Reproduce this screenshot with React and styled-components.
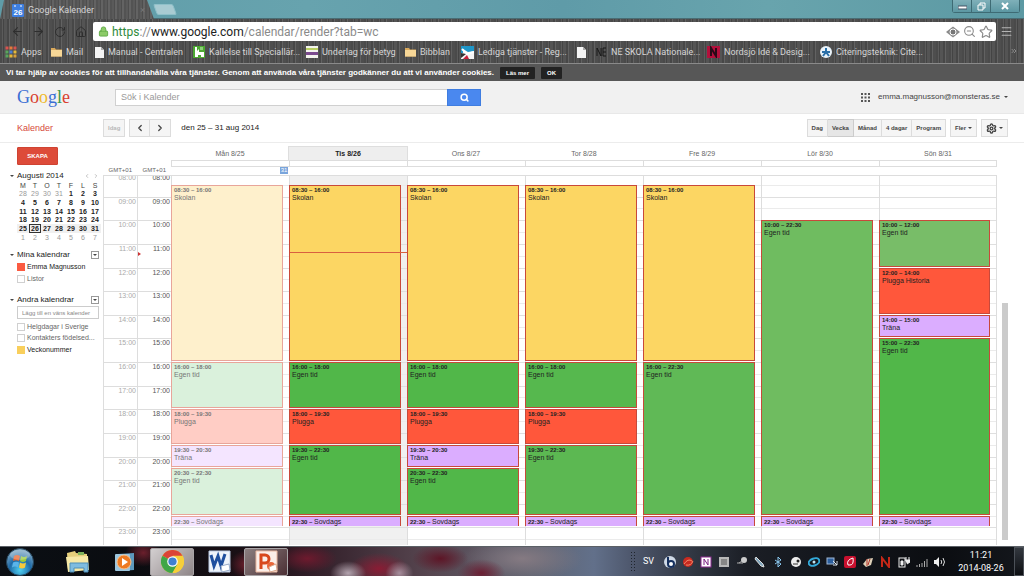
import styled, { createGlobalStyle, css } from 'styled-components';
import { ArrowLeft, ArrowRight, RotateCw, House, ZoomOut, Star, Menu, Search, ChevronLeft, ChevronRight, ChevronsRight, Settings, Lock } from 'lucide-react';

const FIRST_HOUR = 8;
const HOURS = [8, 9, 10, 11, 12, 13, 14, 15, 16, 17, 18, 19, 20, 21, 22, 23];
const HALF_HOURS = Array.from({ length: 32 }, (_, i) => i);

const GlobalStyle = createGlobalStyle`
  * {
    box-sizing: border-box;
  }

  body {
    margin: 0;
    overflow: hidden;
    background: #fff;
    color: #222;
    font: 7px/8px 'Liberation Sans', Arial, sans-serif;
  }

  button, input {
    margin: 0;
    padding: 0;
    font: inherit;
    color: inherit;
  }
`;

const Page = styled.div`
  display: flex;
  flex-direction: column;
  height: 100vh;
`;

/* Browser window */

const TitleBar = styled.div`
  display: flex;
  height: 19px;
  flex: none;
  background: linear-gradient(90deg, #5f9ca8, #67a3ae 30%, #5f9ba8 55%, #68a4ad 75%, #5c99a3);
  border-bottom: 1px solid #4a6d74;
`;

const Tab = styled.div`
  display: flex;
  align-items: center;
  gap: 4px;
  width: 155px;
  height: 19px;
  padding: 1px 10px 0 12px;
  clip-path: polygon(4px 0, 147px 0, 154px 19px, 0 19px);
  background: repeating-linear-gradient(90deg, #5a5a5a 0 2px, #4e4e4e 2px 3px, #636363 3px 5px, #535353 5px 7px);
  color: #d4d4d4;
  font: 9px/12px Roboto, sans-serif;
`;

const TabTitle = styled.span`
  flex: 1;
`;

const TabClose = styled.button`
  border: 0;
  background: none;
  color: #777;
`;

const NewTab = styled.button`
  width: 20px;
  height: 11px;
  margin-top: 4px;
  border: 1px solid #8fc0c9;
  border-radius: 2px;
  background: #a9cbd2;
  transform: skewX(20deg);
`;

const WindowControls = styled.div`
  display: flex;
  height: 13px;
  margin: 0 4px 0 auto;
  border: 1px solid #3e6b74;
  border-top: 0;
  border-radius: 0 0 3px 3px;
`;

const WindowButton = styled.button`
  display: flex;
  justify-content: center;
  align-items: center;
  width: ${({ $wide }) => ($wide ? '28px' : '19px')};
  border: 0;
  border-right: 1px solid #3e6b74;
  background: linear-gradient(#7fb0b9, #5c97a2);

  &:last-child {
    border-right: 0;
  }
`;

const woven = css`
  background: repeating-linear-gradient(90deg, #4a4a4a 0 2px, #5b5b5b 2px 3px, #444 3px 4px, #545454 4px 7px, #474747 7px 9px, #626262 9px 10px, #4e4e4e 10px 13px);
`;

const AddressRow = styled.div`
  display: flex;
  align-items: center;
  height: 24px;
  flex: none;
  padding: 3px 7px 2px 7px;
  ${woven}
`;

const NavButton = styled.button`
  display: flex;
  justify-content: center;
  width: 21px;
  border: 0;
  background: none;
  color: ${({ $light }) => ($light ? '#b5b5b5' : '#2e2e2e')};
`;

const Address = styled.div`
  display: flex;
  flex: 1;
  align-items: center;
  gap: 3px;
  height: 19px;
  margin-left: 2px;
  padding: 0 3px 0 5px;
  border-radius: 2px;
  background: #fff;
  color: #8a8a8a;
  font: 12px/18px Roboto, sans-serif;
`;

const Url = styled.span`
  flex: 1;
`;

const Secure = styled.span`
  color: #2f8b3c;
`;

const Host = styled.span`
  color: #222;
`;

const Bookmarks = styled.nav`
  display: flex;
  align-items: center;
  height: 21px;
  flex: none;
  padding: 0 6px 2px 5px;
  border-bottom: 1px solid #8a8a8a;
  ${woven}
`;

const Bookmark = styled.a`
  display: flex;
  align-items: center;
  gap: 4px;
  width: ${({ $width }) => $width}px;
  flex: none;
  color: #d6d6d6;
  font: 9px/12px Roboto, sans-serif;
  text-decoration: none;
  white-space: nowrap;

  svg {
    flex: none;
  }
`;

const MoreBookmarks = styled.button`
  margin-left: auto;
  border: 0;
  background: none;
  color: #aaa;
`;

/* Google header */

const CookieBar = styled.div`
  display: flex;
  align-items: center;
  height: 17px;
  flex: none;
  padding: 0 6px;
  background: #575757;
  color: #fff;
  font-size: 8px;
  font-weight: bold;
`;

const CookieButton = styled.button`
  height: 12px;
  margin-left: 6px;
  padding: 0 6px;
  border: 0;
  border-radius: 1px;
  background: #222;
  font-size: 6px;
`;

const Header = styled.header`
  display: flex;
  align-items: center;
  height: 33px;
  flex: none;
  padding: 0 16px 0 17px;
  border-bottom: 1px solid #e8e8e8;
  background: #f1f1f1;
`;

const Logo = styled.a`
  width: 98px;
  font: 18px/24px 'Liberation Serif', serif;
  text-decoration: none;
`;

const Letter = styled.span`
  color: ${({ $color }) => $color};
`;

const SearchForm = styled.form`
  display: flex;
  width: 366px;
  height: 17px;
`;

const SearchInput = styled.input`
  flex: 1;
  min-width: 0;
  padding: 0 5px;
  border: 1px solid #d0d0d0;
  border-right: 0;
  outline: none;
  background: #fff;
  font-size: 9px;

  &::placeholder {
    color: #999;
  }
`;

const SearchButton = styled.button`
  display: flex;
  justify-content: center;
  align-items: center;
  width: 34px;
  border: 1px solid #3f7de0;
  background: #4a88ef;
  color: #fff;
`;

const Account = styled.button`
  display: flex;
  align-items: center;
  gap: 4px;
  margin-left: 8px;
  border: 0;
  background: none;
  color: #444;
  font-size: 8px;
`;

const AppsButton = styled.button`
  display: flex;
  margin-left: auto;
  border: 0;
  background: none;
`;

const Caret = styled.span`
  border: 2px solid transparent;
  border-top-color: #444;
  border-bottom: 0;
`;

/* Calendar toolbar */

const Toolbar = styled.div`
  display: flex;
  align-items: center;
  height: 29px;
  flex: none;
  padding: 0 16px 0 17px;
  border-bottom: 1px solid #ececec;
`;

const AppName = styled.h1`
  width: 86px;
  margin: 0;
  color: #d64a3a;
  font-size: 9px;
  font-weight: normal;
`;

const ButtonGroup = styled.div`
  display: flex;
  margin-right: 4px;

  &:last-child {
    margin-right: 0;
  }
`;

const ToolButton = styled.button`
  display: flex;
  justify-content: center;
  align-items: center;
  gap: 2px;
  height: 18px;
  padding: 0 4px;
  min-width: 21px;
  border: 1px solid ${({ $active }) => ($active ? '#ccc' : '#dcdcdc')};
  background: ${({ $active }) => ($active ? '#e6e6e6' : '#f5f5f5')};
  color: ${({ disabled }) => (disabled ? '#b8b8b8' : '#444')};
  font-size: 6px;
  font-weight: bold;

  & + & {
    border-left-width: 0;
  }
`;

const Period = styled.span`
  flex: 1;
  margin-left: 6px;
  font-size: 8px;
`;

/* Sidebar */

const Main = styled.main`
  display: flex;
  flex: 1;
  min-height: 0;
  overflow: hidden;
`;

const Sidebar = styled.aside`
  display: flex;
  flex-direction: column;
  width: 103px;
  flex: none;
  padding: 4px 4px 0 8px;
`;

const CreateButton = styled.button`
  width: 41px;
  height: 18px;
  margin-left: 9px;
  border: 1px solid #cf4332;
  border-radius: 1px;
  background: #dd4b39;
  color: #fff;
  font-size: 6px;
  font-weight: bold;
`;

const SectionTitle = styled.h2`
  display: flex;
  align-items: center;
  gap: 3px;
  height: 12px;
  margin: ${({ $space }) => $space}px 0 0;
  padding-left: 2px;
  font-size: 8px;
  font-weight: normal;
`;

const TitleText = styled.span`
  flex: 1;
`;

const MonthButton = styled.button`
  display: flex;
  border: 0;
  background: none;
  color: #888;
`;

const MenuButton = styled.button`
  display: flex;
  justify-content: center;
  align-items: center;
  width: 8px;
  height: 8px;
  border: 1px solid #999;
  background: #fff;
`;

const MiniMonth = styled.table`
  width: 84px;
  height: 60px;
  margin-left: 9px;
  border-collapse: collapse;
  table-layout: fixed;
  text-align: center;
  line-height: 7px;
`;

const WeekdayCell = styled.th`
  padding: 0;
  font-weight: normal;
  color: #444;
`;

const DayCell = styled.td`
  padding: 0;
  background: ${({ $week }) => ($week ? '#f0f0f0' : 'none')};
  color: ${({ $other }) => ($other ? '#999' : '#222')};
  font-weight: ${({ $other }) => ($other ? 'normal' : 'bold')};
  outline: ${({ $today }) => ($today ? '1px solid #333' : 'none')};
  outline-offset: -1px;
`;

const CalendarItem = styled.label`
  display: flex;
  align-items: center;
  gap: 2px;
  height: ${({ $tall }) => ($tall ? '12px' : '11px')};
  margin-left: 9px;
  color: ${({ $on }) => ($on ? '#222' : '#666')};
  white-space: nowrap;
`;

const Swatch = styled.input`
  appearance: none;
  width: 8px;
  height: 8px;
  border: 1px solid ${({ $color }) => $color || '#d0d0d0'};
  background: ${({ $color }) => $color || '#fff'};
`;

const FriendInput = styled.input`
  width: 82px;
  height: 13px;
  margin: 0 0 2px 9px;
  padding: 0 4px;
  border: 1px solid #ccc;
  font-size: 6px;

  &::placeholder {
    color: #888;
  }
`;

/* Week view */

const Week = styled.section`
  display: flex;
  flex: 1;
  flex-direction: column;
  min-width: 0;
  padding: 4px 0 1px;
`;

const WeekGrid = styled.div`
  display: grid;
  grid-template-columns: 34px 34px repeat(7, 1fr);
  flex: none;
`;

const HeadRow = styled(WeekGrid)`
  margin-right: 27px;
  border-bottom: 1px solid #ddd;
`;

const ZoneName = styled.div`
  align-self: end;
  padding: 0 5px 1px 0;
  color: #666;
  font-size: 6px;
  text-align: right;
`;

const DayHead = styled.div`
  display: flex;
  flex-direction: column;
  height: 28px;
  color: ${({ $today }) => ($today ? '#222' : '#666')};
  font-weight: ${({ $today }) => ($today ? 'bold' : 'normal')};
  text-align: center;
`;

const DayName = styled.div`
  height: 13px;
  background: ${({ $today }) => ($today ? '#eeeeee' : 'none')};
  line-height: 13px;
  outline: ${({ $today }) => ($today ? '1px solid #dedede' : 'none')};
`;

const AllDay = styled.div`
  height: 7px;
  border: 1px solid #ddd;
  border-right-width: 0;

  ${DayHead}:last-child & {
    border-right-width: 1px;
  }
`;

const WeekNumber = styled.span`
  align-self: flex-end;
  width: 8px;
  height: 7px;
  margin-right: 1px;
  background: #7aa5dc;
  color: #fff;
  font-size: 6px;
  line-height: 7px;
`;

const Viewport = styled.div`
  display: flex;
  flex: 1;
  min-height: 0;
  overflow: hidden;
`;

const Body = styled(WeekGrid)`
  grid-template-rows: 100%;
  flex: 1;
  height: 378px;
  margin-top: -3px;
`;

const TimeColumn = styled.div`
  display: grid;
  grid-template-rows: repeat(16, minmax(0, 1fr));
  border-left: 1px solid #ddd;
  color: ${({ $faded }) => ($faded ? '#aaa' : '#555')};
`;

const HourLabel = styled.div`
  border-top: 1px solid #ddd;
  padding-right: 1px;
  line-height: 8px;
  text-align: right;
`;

const DayColumn = styled.div`
  position: relative;
  display: grid;
  grid-template-rows: repeat(32, minmax(0, 1fr));
  grid-template-columns: 1fr;
  border-left: 1px solid #ddd;
  background: ${({ $today }) => ($today ? '#f0f0f0' : '#fff')};

  &:last-child {
    border-right: 1px solid #ddd;
  }
`;

const Slot = styled.div`
  grid-column: 1;
  border-top: 1px solid ${({ $half }) => ($half ? '#ebebeb' : '#dfdfdf')};
`;

const EventBox = styled.article`
  z-index: 1;
  grid-column: 1;
  overflow: hidden;
  margin: 0 6px 1px -1px;
  padding: 1px 2px;
  border: 1px solid ${({ $past }) => ($past ? '#e8a59a' : '#c8493a')};
  background: ${({ $color }) => $color};
  color: ${({ $past }) => ($past ? '#777' : '#222')};
  line-height: 7px;

  ${({ $short }) =>
    $short &&
    css`
      border-bottom: 0;
      line-height: 8px;
      white-space: nowrap;
    `}
`;

const EventTime = styled.div`
  display: ${({ $inline }) => ($inline ? 'inline' : 'block')};
  font-size: 6px;
  font-weight: bold;
`;

const NowLine = styled.div`
  position: absolute;
  z-index: 2;
  right: 0;
  left: 0;
  height: 1px;
  background: #d9603f;
`;

const NowMarker = styled.div`
  position: absolute;
  border: 2px solid transparent;
  border-left: 3px solid #c33;
  border-right: 0;
`;

const ZoneColumn = styled(TimeColumn)`
  position: relative;
`;

const ScrollTrack = styled.div`
  display: flex;
  flex-direction: column;
  justify-content: flex-end;
  width: 27px;
  flex: none;
  padding: 0 16px 5px 5px;
`;

const ScrollThumb = styled.div`
  height: 65%;
  background: #cbcbcb;
`;

/* Windows taskbar */

const Taskbar = styled.footer`
  display: flex;
  align-items: center;
  height: 30px;
  flex: none;
  border-top: 1px solid #5b6066;
  background:
    radial-gradient(ellipse 18px 14px at 14% 20%, #6b1f2c, transparent),
    radial-gradient(ellipse 16px 14px at 24% 60%, #6b1f2c, transparent),
    radial-gradient(ellipse 18px 12px at 34% 90%, #b3a3ae, transparent),
    radial-gradient(ellipse 14px 12px at 39% 90%, #a58e9c, transparent),
    radial-gradient(ellipse 30px 14px at 30% 40%, #6e1a2e, transparent),
    radial-gradient(ellipse 30px 16px at 37% 75%, #8a1c34, transparent),
    radial-gradient(ellipse 28px 14px at 43% 40%, #5d1526, transparent),
    radial-gradient(ellipse 24px 14px at 47% 90%, #6b1f33, transparent),
    radial-gradient(ellipse 60px 22px at 51% 40%, #857a82, transparent),
    linear-gradient(90deg, #0b0f14, #0a0c10 13%, #1c1016 25%, #33202a 31%, #574650 42%, #5f6472 52%, #62708a 58%, #4c556a 62%, #2f3540 68%, #1b1e25 73%, #14171d 80%, #0b0d11 92%, #14171c);
  color: #fff;
  font: 9px/13px Roboto, sans-serif;
`;

const StartButton = styled.button`
  display: flex;
  width: 42px;
  padding-left: 6px;
  border: 0;
  background: none;
`;

const AppButton = styled.button`
  display: flex;
  justify-content: center;
  align-items: center;
  width: 44px;
  height: 28px;
  margin-right: 3px;
  border: 1px solid ${({ $open }) => ($open ? '#a8a4a6' : 'transparent')};
  border-radius: 2px;
  background: ${({ $open, $active }) => ($active ? 'linear-gradient(135deg, #d3cfd0, #8f8688)' : $open ? 'linear-gradient(135deg, #8b7f80, #4c3035)' : 'none')};
`;

const AppList = styled.div`
  display: flex;
  flex: 1;
  padding-left: 14px;
`;

const Grip = styled.div`
  width: 6px;
  height: 22px;
  margin-right: 7px;
  background: radial-gradient(circle, #20252e 1px, transparent 1px) 0 0 / 3px 3px;
`;

const Language = styled.span`
  width: 21px;
`;

const Tray = styled.div`
  display: flex;
  gap: 6px;
`;

const TrayButton = styled.button`
  display: flex;
  width: 12px;
  border: 0;
  background: none;
`;

const Clock = styled.time`
  width: 66px;
  margin-left: 2px;
  text-align: center;
`;

const ShowDesktop = styled.button`
  align-self: stretch;
  width: 10px;
  border: 1px solid #4c5158;
  background: linear-gradient(#33383f, #0c0e12);
`;

const YELLOW = '#fcd663';
const RED = '#ff573b';
const PURPLE = '#dbadff';
const GREEN = '#51b749';

const days = [
  {
    name: 'Mån 8/25',
    past: true,
    events: [
      [8.5, 16, 'Skolan', '#fef0cc'],
      [16, 18, 'Egen tid', '#daf1dc'],
      [18, 19.5, 'Plugga', '#ffcdc5'],
      [19.5, 20.5, 'Träna', '#f4e5ff'],
      [20.5, 22.5, 'Egen tid', '#daf1dc'],
      [22.5, 23, 'Sovdags', '#f4e5ff'],
    ],
  },
  {
    name: 'Tis 8/26',
    today: true,
    events: [
      [8.5, 16, 'Skolan', YELLOW],
      [16, 18, 'Egen tid', GREEN],
      [18, 19.5, 'Plugga', RED],
      [19.5, 22.5, 'Egen tid', GREEN],
      [22.5, 23, 'Sovdags', PURPLE],
    ],
  },
  {
    name: 'Ons 8/27',
    events: [
      [8.5, 16, 'Skolan', YELLOW],
      [16, 18, 'Egen tid', GREEN],
      [18, 19.5, 'Plugga', RED],
      [19.5, 20.5, 'Träna', PURPLE],
      [20.5, 22.5, 'Egen tid', GREEN],
      [22.5, 23, 'Sovdags', PURPLE],
    ],
  },
  {
    name: 'Tor 8/28',
    events: [
      [8.5, 16, 'Skolan', YELLOW],
      [16, 18, 'Egen tid', '#56b84e'],
      [18, 19.5, 'Plugga', RED],
      [19.5, 22.5, 'Egen tid', '#5cb852'],
      [22.5, 23, 'Sovdags', PURPLE],
    ],
  },
  {
    name: 'Fre 8/29',
    events: [
      [8.5, 16, 'Skolan', YELLOW],
      [16, 22.5, 'Egen tid', '#60b956'],
      [22.5, 23, 'Sovdags', PURPLE],
    ],
  },
  {
    name: 'Lör 8/30',
    events: [
      [10, 22.5, 'Egen tid', '#6fbc60'],
      [22.5, 23, 'Sovdags', PURPLE],
    ],
  },
  {
    name: 'Sön 8/31',
    events: [
      [10, 12, 'Egen tid', '#78bd68'],
      [12, 14, 'Plugga Historia', RED],
      [14, 15, 'Träna', PURPLE],
      [15, 22.5, 'Egen tid', GREEN],
      [22.5, 23, 'Sovdags', PURPLE],
    ],
  },
];

const monthRows = [
  [28, 29, 30, 31, 1, 2, 3],
  [4, 5, 6, 7, 8, 9, 10],
  [11, 12, 13, 14, 15, 16, 17],
  [18, 19, 20, 21, 22, 23, 24],
  [25, 26, 27, 28, 29, 30, 31],
  [1, 2, 3, 4, 5, 6, 7],
];

const formatTime = (value) => {
  const hour = String(Math.floor(value)).padStart(2, '0');
  return `${hour}:${value % 1 ? '30' : '00'}`;
};

const toRow = (value) => (value - FIRST_HOUR) * 2 + 1;
const nowOffset = `${((11.35 - FIRST_HOUR) / 16) * 100}%`;

/* Icons */

const AppsIcon = () => (
  <svg width="12" height="12" viewBox="0 0 12 12">
    {['#d9534f', '#e57b3a', '#d9534f', '#58a65c', '#4c7fd0', '#e5b93a', '#58a65c', '#e5b93a', '#d9a03a'].map((fill, i) => (
      <rect key={i} x={(i % 3) * 4 + 0.5} y={Math.floor(i / 3) * 4 + 0.5} width="3" height="3" fill={fill} />
    ))}
  </svg>
);

const FolderIcon = () => (
  <svg width="11" height="10" viewBox="0 0 11 10">
    <path d="M0 1h4l1 1.500h6V9.500H0z" fill="#d9a95c" />
    <path d="M0 3h11v6.500H0z" fill="#f7d797" />
  </svg>
);

const FileIcon = () => (
  <svg width="9" height="11" viewBox="0 0 9 11">
    <path d="M0 0h6l3 3v8H0z" fill="#f4f4f4" />
    <path d="M6 0v3h3z" fill="#aaa" />
  </svg>
);

const SchoolIcon = () => (
  <svg width="12" height="12" viewBox="0 0 12 12">
    <rect width="12" height="12" fill="#4ca832" />
    <path d="M2 1h2v4l2-2v3h5v5H8V9H5v2H2z" fill="#fff" />
    <path d="M7 1h3v3H7z" fill="#8ed07a" />
  </svg>
);

const StripesIcon = () => (
  <svg width="12" height="12" viewBox="0 0 12 12">
    <rect width="12" height="12" fill="#f4f4ee" />
    <path d="M0 2h12v2H0z" fill="#b9cf63" />
    <path d="M0 6h12v3H0z" fill="#7b4b8e" />
  </svg>
);

const RegionIcon = () => (
  <svg width="13" height="13" viewBox="0 0 13 13">
    <rect width="13" height="13" fill="#f5f5f5" />
    <path d="M0 0h13v5L7 6 2 3v4H0z" fill="#1f96c8" />
    <path d="M2 13l4-4 2 4z" fill="#c8203c" />
    <path d="M1 3l5 5 7-2" stroke="#fff" strokeWidth="2" fill="none" />
    <path d="M0 7l5 1-5 4z" fill="#333" />
  </svg>
);

const NeIcon = () => (
  <svg width="11" height="10" viewBox="0 0 11 10" fill="none" stroke="#161616">
    <path d="M1 9V1l4 8V1M10 1H7v8h3M7 5h3" />
  </svg>
);

const NordsjoIcon = () => (
  <svg width="13" height="12" viewBox="0 0 13 12">
    <rect width="13" height="12" fill="#b3103c" />
    <path d="M4 10V2l5 8V2" fill="none" stroke="#2a0a18" strokeWidth="2" />
  </svg>
);

const CiteIcon = () => (
  <svg width="12" height="12" viewBox="0 0 12 12">
    <circle cx="6" cy="6" r="6" fill="#eaf3fa" />
    <path d="M6 2v4M6 6l-4 0M6 6h4M6 6l-3 4M6 6l3 4" stroke="#2a6fa8" strokeWidth="2" />
  </svg>
);

const CalendarIcon = () => (
  <svg width="12" height="13" viewBox="0 0 12 13">
    <rect width="12" height="13" rx="1" fill="#3f7fe0" />
    <path d="M3 1v2M9 1v2" stroke="#fff" />
    <text x="6" y="11" textAnchor="middle" fontSize="8" fontWeight="bold" fill="#fff" fontFamily="Liberation Sans">26</text>
  </svg>
);

const EyeIcon = () => (
  <svg width="14" height="12" viewBox="0 0 14 12">
    <path d="M0 6l7-5.500L14 6l-7 5.500z" fill="#8a8a8a" />
    <circle cx="7" cy="6" r="3" fill="#777" stroke="#fff" />
  </svg>
);

const GridIcon = () => (
  <svg width="9" height="9" viewBox="0 0 9 9" fill="#555">
    {[0, 1, 2, 3, 4, 5, 6, 7, 8].map((i) => (
      <rect key={i} x={(i % 3) * 3.5} y={Math.floor(i / 3) * 3.5} width="2" height="2" />
    ))}
  </svg>
);

const StartOrb = () => (
  <svg width="28" height="28" viewBox="0 0 28 28">
    <defs>
      <radialGradient id="orb" cx="50%" cy="80%" r="80%">
        <stop offset="0" stopColor="#4fd0f0" />
        <stop offset="0.5" stopColor="#1f6ba8" />
        <stop offset="1" stopColor="#8fb2c8" />
      </radialGradient>
    </defs>
    <circle cx="14" cy="14" r="13.500" fill="url(#orb)" stroke="#25455c" />
    <path d="M8 8q3-2 6 0l-1 5q-3-1.500-6 0z" fill="#e8642e" />
    <path d="M15 8q3 2 6 0l-1 5q-3 2-6 0z" fill="#9ccb3b" />
    <path d="M7 14.500q3-1.500 6 0l-1 5q-3-2-6 0z" fill="#5ab4ea" />
    <path d="M14 14.500q3 2 6 0l-1 5q-3 2-6 0z" fill="#f8c93c" />
    <ellipse cx="14" cy="7" rx="10" ry="5" fill="#fff" opacity="0.25" />
  </svg>
);

const ExplorerIcon = () => (
  <svg width="26" height="24" viewBox="0 0 26 24">
    <path d="M2 3l8-2 1 2 11 1v16H3z" fill="#e6cf7c" />
    <path d="M1 7l22-1 1 14-21 2z" fill="#f6e8a6" />
    <path d="M5 13h18v9h-4v-4H9v4H5z" fill="#7fbce0" stroke="#4f8fb8" />
    <path d="M13 2h6v3h-6z" fill="#7db25c" />
  </svg>
);

const PlayerIcon = () => (
  <svg width="20" height="20" viewBox="0 0 20 20">
    <path d="M3 2l16-1v17l-14 1z" fill="#5d99bd" />
    <rect x="0" y="2" width="15" height="17" rx="1" fill="#9cc6de" />
    <circle cx="9" cy="10" r="7" fill="#ee7a22" stroke="#f9c08a" />
    <path d="M7 6l6 4-6 4z" fill="#fff" />
  </svg>
);

const ChromeIcon = () => (
  <svg width="23" height="23" viewBox="0 0 24 24">
    <circle cx="12" cy="12" r="12" fill="#f6cf3a" />
    <path d="M12 12L1.600 6A12 12 0 0 1 22.400 6z" fill="#dc4437" />
    <path d="M12 12L1.600 6A12 12 0 0 0 12 24l5-9z" fill="#3fa648" />
    <path d="M12 6h10.400A12 12 0 0 1 12 24l5-9z" fill="#f6cf3a" />
    <circle cx="12" cy="12" r="5.500" fill="#fff" />
    <circle cx="12" cy="12" r="4.300" fill="#3f80d0" />
  </svg>
);

const WordIcon = () => (
  <svg width="23" height="23" viewBox="0 0 23 23">
    <path d="M1 1h21v21H1z" fill="#eef3fa" stroke="#b9c9e2" />
    <path d="M3 5l3 11 4-10 3 10 4-12" fill="none" stroke="#1f4f9e" strokeWidth="3" />
    <path d="M13 16l8-2 1 6-8 2z" fill="#fff" stroke="#98abc9" />
  </svg>
);

const PowerPointIcon = () => (
  <svg width="23" height="23" viewBox="0 0 23 23">
    <path d="M1 1h21v21H1z" fill="#fbeee8" stroke="#e9b79f" />
    <path d="M6 19V5h4a4 4 0 0 1 0 8H6" fill="none" stroke="#d8481c" strokeWidth="3" />
    <circle cx="16" cy="16" r="4" fill="#e8663a" />
    <path d="M14 17l7-3 1 6-7 2z" fill="#fff" stroke="#d9a58a" />
  </svg>
);

const trayIcons = [
  ['Spotlight', <><circle cx="6" cy="6" r="6" fill="#cfd9e6" /><circle cx="7" cy="8" r="3" fill="#fff" stroke="#16305e" strokeWidth="2" /><path d="M4 1v7" stroke="#16305e" strokeWidth="2" /></>],
  ['Antivirus', <><circle cx="6" cy="6" r="5" fill="#c82a20" /><path d="M2 8q4-6 8-3M4 9q5 1 7-4" stroke="#f28a6a" fill="none" /></>],
  ['OneNote', <><rect x="1" y="1" width="10" height="10" fill="#fff" stroke="#8b2b90" /><path d="M4 9V3l4 6V3" fill="none" stroke="#7b1f82" /></>],
  ['Notes', <><rect x="1" y="1" width="10" height="10" fill="#b8b8b8" /><path d="M3 4h6M3 6h6M3 8h6" stroke="#555" /></>],
  ['Device', <><circle cx="8" cy="4" r="3" fill="#ccc" /><path d="M1 7h6M6 5l-3 2" stroke="#aaa" /></>],
  ['Pen', <path d="M2 1l7 7 1 3-3-1L1 3z" fill="#7fa6bd" stroke="#ddd" />],
  ['Bluetooth', <path d="M3 4l6 4-3 3V1l3 3-6 4" fill="none" stroke="#8ccaf2" />],
  ['Disc', <><circle cx="6" cy="6" r="5" fill="#eee" /><circle cx="8" cy="5" r="1.500" fill="#222" /><path d="M3 8h5" stroke="#333" /></>],
  ['Network tool', <><ellipse cx="6" cy="6" rx="5.500" ry="3.500" fill="none" stroke="#33a9d8" strokeWidth="2" transform="rotate(-20 6 6)" /><circle cx="6" cy="6" r="1.500" fill="#bfe8f7" /></>],
  ['Display', <><rect x="1" y="2" width="7" height="6" fill="#2c5f9e" stroke="#9fb8d6" /><path d="M7 5l4 4M11 5v4H7" stroke="#dde6f0" /></>],
  ['Update', <><rect width="12" height="12" rx="2" fill="#c8102e" /><path d="M4 9q-2-5 5-7 1 7-3 7z" fill="none" stroke="#fff" /></>],
  ['Tools', <><path d="M1 8l4-5 6-1-2 7-5 2z" fill="#ddd0b8" /><path d="M5 3v7M8 3l-2 6" stroke="#b2342a" /></>],
  ['Nero', <path d="M2 11V2l7 9V1" fill="none" stroke="#c42818" strokeWidth="2" />],
  ['Battery', <><rect x="1" y="2" width="6" height="9" fill="none" stroke="#eee" /><path d="M3 5h2v4H3zM8 1v3M11 1v3M7 4h5v2l-3 2" fill="#eee" stroke="#eee" /></>],
  ['Signal', <path d="M1 11V9M3.500 11V8M6 11V7M8.500 11V5M11 11V3" stroke="#aaa" />],
  ['Volume', <><path d="M0 4h2l3-3v10L2 8H0z" fill="#eee" /><path d="M7 4q1.500 2 0 4M9 2q3 4 0 8" stroke="#ddd" fill="none" /></>],
];

const bookmarks = [
  ['Apps', AppsIcon, 46],
  ['Mail', FolderIcon, 44],
  ['Manual - Centralen', FileIcon, 98],
  ['Kallelse till Speciallär...', SchoolIcon, 113],
  ['Underlag för betyg', StripesIcon, 99],
  ['Bibblan', FolderIcon, 56],
  ['Lediga tjänster - Reg...', RegionIcon, 116],
  ['', FileIcon, 19],
  ['NE SKOLA Nationale...', NeIcon, 111],
  ['Nordsjö Idé & Desig...', NordsjoIcon, 113],
  ['Citeringsteknik: Cite...', CiteIcon, 110],
];

const Browser = () => (
  <>
    <TitleBar>
      <Tab>
        <CalendarIcon />
        <TabTitle>Google Kalender</TabTitle>
        <TabClose aria-label="Stäng flik">×</TabClose>
      </Tab>
      <NewTab aria-label="Ny flik" />
      <WindowControls>
        <WindowButton aria-label="Minimera">
          <svg width="9" height="8"><rect y="4" width="9" height="3" fill="#fff" stroke="#456" /></svg>
        </WindowButton>
        <WindowButton aria-label="Återställ">
          <svg width="9" height="9" fill="none" stroke="#fff"><path d="M3 3V1h5v5H6M1 3h5v5H1z" /></svg>
        </WindowButton>
        <WindowButton $wide aria-label="Stäng">
          <svg width="8" height="8"><path d="M1 1l6 6M7 1L1 7" stroke="#fff" strokeWidth="2" /></svg>
        </WindowButton>
      </WindowControls>
    </TitleBar>
    <AddressRow>
      <NavButton aria-label="Bakåt"><ArrowLeft size={13} /></NavButton>
      <NavButton aria-label="Framåt"><ArrowRight size={13} /></NavButton>
      <NavButton aria-label="Uppdatera"><RotateCw size={12} /></NavButton>
      <NavButton aria-label="Startsida"><House size={12} /></NavButton>
      <Address>
        <Lock size={11} color="#5faa45" fill="#8ccb68" />
        <Url>
          <Secure>https</Secure>://<Host>www.google.com</Host>/calendar/render?tab=wc
        </Url>
        <EyeIcon />
        <ZoomOut size={13} />
        <Star size={14} />
      </Address>
      <NavButton $light aria-label="Meny"><Menu size={13} /></NavButton>
    </AddressRow>
    <Bookmarks>
      {bookmarks.map(([title, Icon, width], i) => (
        <Bookmark key={i} href="#" $width={width} aria-label={title || 'Bokmärke'}>
          <Icon />
          {title}
        </Bookmark>
      ))}
      <MoreBookmarks aria-label="Fler bokmärken"><ChevronsRight size={8} /></MoreBookmarks>
    </Bookmarks>
  </>
);

const GoogleHeader = () => (
  <>
    <CookieBar>
      Vi tar hjälp av cookies för att tillhandahålla våra tjänster. Genom att använda våra tjänster godkänner du att vi använder cookies.
      <CookieButton>Läs mer</CookieButton>
      <CookieButton>OK</CookieButton>
    </CookieBar>
    <Header>
      <Logo href="#">
        <Letter $color="#3b6fd4">G</Letter>
        <Letter $color="#d8402f">o</Letter>
        <Letter $color="#efb92b">o</Letter>
        <Letter $color="#3b6fd4">g</Letter>
        <Letter $color="#3c9a4c">l</Letter>
        <Letter $color="#d8402f">e</Letter>
      </Logo>
      <SearchForm>
        <SearchInput placeholder="Sök i Kalender" aria-label="Sök i Kalender" />
        <SearchButton type="button" aria-label="Sök"><Search size={9} strokeWidth={4} /></SearchButton>
      </SearchForm>
      <AppsButton aria-label="Appar"><GridIcon /></AppsButton>
      <Account>emma.magnusson@monsteras.se <Caret /></Account>
    </Header>
    <Toolbar>
      <AppName>Kalender</AppName>
      <ButtonGroup>
        <ToolButton disabled>Idag</ToolButton>
      </ButtonGroup>
      <ButtonGroup>
        <ToolButton aria-label="Föregående"><ChevronLeft size={10} strokeWidth={3} /></ToolButton>
        <ToolButton aria-label="Nästa"><ChevronRight size={10} strokeWidth={3} /></ToolButton>
      </ButtonGroup>
      <Period>den 25 – 31 aug 2014</Period>
      <ButtonGroup>
        <ToolButton>Dag</ToolButton>
        <ToolButton $active>Vecka</ToolButton>
        <ToolButton>Månad</ToolButton>
        <ToolButton>4 dagar</ToolButton>
        <ToolButton>Program</ToolButton>
      </ButtonGroup>
      <ButtonGroup>
        <ToolButton>Fler <Caret /></ToolButton>
      </ButtonGroup>
      <ButtonGroup>
        <ToolButton aria-label="Inställningar"><Settings size={11} strokeWidth={3} /> <Caret /></ToolButton>
      </ButtonGroup>
    </Toolbar>
  </>
);

const CalendarSidebar = () => (
  <Sidebar>
    <CreateButton>SKAPA</CreateButton>
    <SectionTitle $space={5}>
      <Caret />
      <TitleText>Augusti 2014</TitleText>
      <MonthButton aria-label="Föregående månad"><ChevronLeft size={6} /></MonthButton>
      <MonthButton aria-label="Nästa månad"><ChevronRight size={6} /></MonthButton>
    </SectionTitle>
    <MiniMonth>
      <thead>
        <tr>
          {['M', 'T', 'O', 'T', 'F', 'L', 'S'].map((day, i) => (
            <WeekdayCell key={i}>{day}</WeekdayCell>
          ))}
        </tr>
      </thead>
      <tbody>
        {monthRows.map((row, r) => (
          <tr key={r}>
            {row.map((day) => (
              <DayCell key={day} $week={r === 4} $today={r === 4 && day === 26} $other={r === 5 || (r === 0 && day > 7)}>
                {day}
              </DayCell>
            ))}
          </tr>
        ))}
      </tbody>
    </MiniMonth>
    <SectionTitle $space={7}>
      <Caret />
      <TitleText>Mina kalendrar</TitleText>
      <MenuButton aria-label="Mina kalendrar, meny"><Caret /></MenuButton>
    </SectionTitle>
    <CalendarItem $on $tall><Swatch type="checkbox" defaultChecked $color="#fb5b41" />Emma Magnusson</CalendarItem>
    <CalendarItem><Swatch type="checkbox" />Listor</CalendarItem>
    <SectionTitle $space={10}>
      <Caret />
      <TitleText>Andra kalendrar</TitleText>
      <MenuButton aria-label="Andra kalendrar, meny"><Caret /></MenuButton>
    </SectionTitle>
    <FriendInput placeholder="Lägg till en väns kalender" aria-label="Lägg till en väns kalender" />
    <CalendarItem><Swatch type="checkbox" />Helgdagar i Sverige</CalendarItem>
    <CalendarItem $tall><Swatch type="checkbox" />Kontakters födelsed...</CalendarItem>
    <CalendarItem $on><Swatch type="checkbox" defaultChecked $color="#f9cf5c" />Veckonummer</CalendarItem>
  </Sidebar>
);

const Day = ({ day }) => (
  <DayColumn $today={day.today}>
    {HALF_HOURS.map((i) => (
      <Slot key={i} $half={i % 2 === 1} style={{ gridRow: i + 1 }} />
    ))}
    {day.events.map(([start, end, title, color]) => {
      const short = end - start <= 0.5;

      return (
        <EventBox key={start} $color={color} $past={day.past} $short={short} style={{ gridRow: `${toRow(start)} / ${toRow(end)}` }}>
          <EventTime $inline={short}>
            {formatTime(start)} – {!short && formatTime(end)}
          </EventTime>
          {title}
        </EventBox>
      );
    })}
    {day.today && <NowLine style={{ top: nowOffset }} />}
  </DayColumn>
);

const WeekView = () => (
  <Week>
    <HeadRow>
      <ZoneName>GMT+01</ZoneName>
      <ZoneName>GMT+01</ZoneName>
      {days.map((day) => (
        <DayHead key={day.name} $today={day.today}>
          <DayName $today={day.today}>{day.name}</DayName>
          <AllDay />
          {day.past && <WeekNumber>31</WeekNumber>}
        </DayHead>
      ))}
    </HeadRow>
    <Viewport>
      <Body>
        <TimeColumn $faded>
          {HOURS.map((hour) => <HourLabel key={hour}>{formatTime(hour)}</HourLabel>)}
        </TimeColumn>
        <ZoneColumn>
          {HOURS.map((hour) => <HourLabel key={hour}>{formatTime(hour)}</HourLabel>)}
          <NowMarker style={{ top: nowOffset }} />
        </ZoneColumn>
        {days.map((day) => <Day key={day.name} day={day} />)}
      </Body>
      <ScrollTrack>
        <ScrollThumb />
      </ScrollTrack>
    </Viewport>
  </Week>
);

const WindowsTaskbar = () => (
  <Taskbar>
    <StartButton aria-label="Start"><StartOrb /></StartButton>
    <AppList>
      <AppButton aria-label="Utforskaren"><ExplorerIcon /></AppButton>
      <AppButton aria-label="Media Player"><PlayerIcon /></AppButton>
      <AppButton $open $active aria-label="Chrome"><ChromeIcon /></AppButton>
      <AppButton aria-label="Word"><WordIcon /></AppButton>
      <AppButton $open aria-label="PowerPoint"><PowerPointIcon /></AppButton>
    </AppList>
    <Grip />
    <Language>SV</Language>
    <Tray>
      {trayIcons.map(([name, drawing]) => (
        <TrayButton key={name} aria-label={name}>
          <svg width="12" height="12" viewBox="0 0 12 12">{drawing}</svg>
        </TrayButton>
      ))}
    </Tray>
    <Clock>
      11:21
      <br />
      2014-08-26
    </Clock>
    <ShowDesktop aria-label="Visa skrivbordet" />
  </Taskbar>
);

const App = () => (
  <Page>
    <GlobalStyle />
    <Browser />
    <GoogleHeader />
    <Main>
      <CalendarSidebar />
      <WeekView />
    </Main>
    <WindowsTaskbar />
  </Page>
);

export default App;
